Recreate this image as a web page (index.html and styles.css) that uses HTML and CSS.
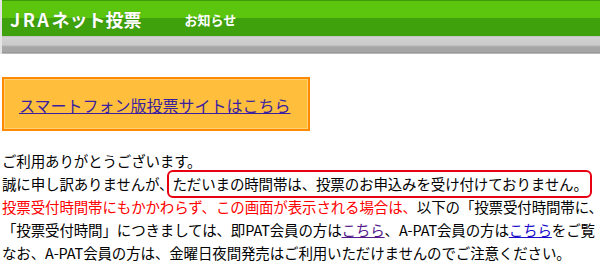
FILE: index.html
```html
<!DOCTYPE html>
<html lang="ja">
<head>
    <meta charset="UTF-8">
    <meta name="viewport" content="width=device-width, initial-scale=1.0">
    <title>JRAネット投票 お知らせ</title>
    <link rel="stylesheet" href="styles.css">
</head>
<body>
    <div class="header">
        <div class="header-bar">
            <span class="logo"><span class="logo-jra">JRA</span>ネット投票</span>
            <span class="header-title">お知らせ</span>
        </div>
        <div class="header-sub"></div>
    </div>

    <div class="content">
        <div class="sp-box">
            <a href="#" class="sp-link">スマートフォン版投票サイトはこちら</a>
        </div>

        <div class="message">
            <p>ご利用ありがとうございます。</p>
            <p>誠に申し訳ありませんが、<span class="notice">ただいまの時間帯は、投票のお申込みを受け付けておりません。</span></p>
            <p><span class="red">投票受付時間帯にもかかわらず、この画面が表示される場合は、</span>以下の「投票受付時間帯に、</p>
            <p>「投票受付時間」につきましては、即PAT会員の方は<a href="#" class="visited">こちら</a>、A-PAT会員の方は<a href="#">こちら</a>をご覧</p>
            <p>なお、A-PAT会員の方は、金曜日夜間発売はご利用いただけませんのでご注意ください。</p>
        </div>
    </div>
</body>
</html>
```

FILE: styles.css
```css
body {
    margin: 0;
    padding: 0;
    background-color: #fff;
    font-family: "Noto Sans CJK JP", "Noto Sans", sans-serif;
    color: #000;
    overflow: hidden;
}
.header {
    border-left: 2px solid #e4e4e4;
}
.header-bar {
    height: 35px;
    border-top: 1px solid #3c9a0c;
    background: linear-gradient(#5cc60f 0, #5cc60f 17px, #3fa20d 17px, #3fa20d 100%);
    display: flex;
    align-items: center;
    padding-left: 8px;
}
.logo {
    color: #fff;
    font-weight: bold;
    font-size: 18px;
    text-shadow: 0 0 1px #2d7a08;
}
.logo-jra {
    letter-spacing: 2.5px;
}
.header-title {
    color: #fff;
    font-weight: bold;
    font-size: 13px;
    margin-left: 43px;
    margin-top: 2px;
}
.header-sub {
    height: 18px;
    background: linear-gradient(#b8b8b8 0, #d2d2d2 1px, #cacaca 9px, #b4b4b4 10px, #a6a6a6 11px, #a6a6a6 16px, #8e8e8e 17px, #e0e0e0 18px);
}
.content {
    padding-left: 2px;
}
.sp-box {
    height: 50px;
    width: 289px;
    margin-top: 23px;
    padding-left: 15px;
    background-color: #ffbe3c;
    border: 2px solid #ff8a00;
    box-shadow: inset 0 0 0 1px #ffd070;
    display: flex;
    align-items: center;
}
.sp-link {
    font-size: 16px;
    color: #3a1fa0;
    margin-top: 2px;
}
.message {
    margin-top: 18px;
    font-size: 14.5px;
    line-height: 23px;
    white-space: nowrap;
    letter-spacing: -0.15px;
}
.message p {
    margin: 0;
}
.notice {
    border: 2px solid #e60012;
    border-radius: 6px;
    padding: 1px 2px 2px 3px;
    margin-left: -6px;
}
.red {
    color: #ff0000;
}
.message a {
    color: #1a0dcc;
}
.message a.visited {
    color: #551a8b;
}
```
